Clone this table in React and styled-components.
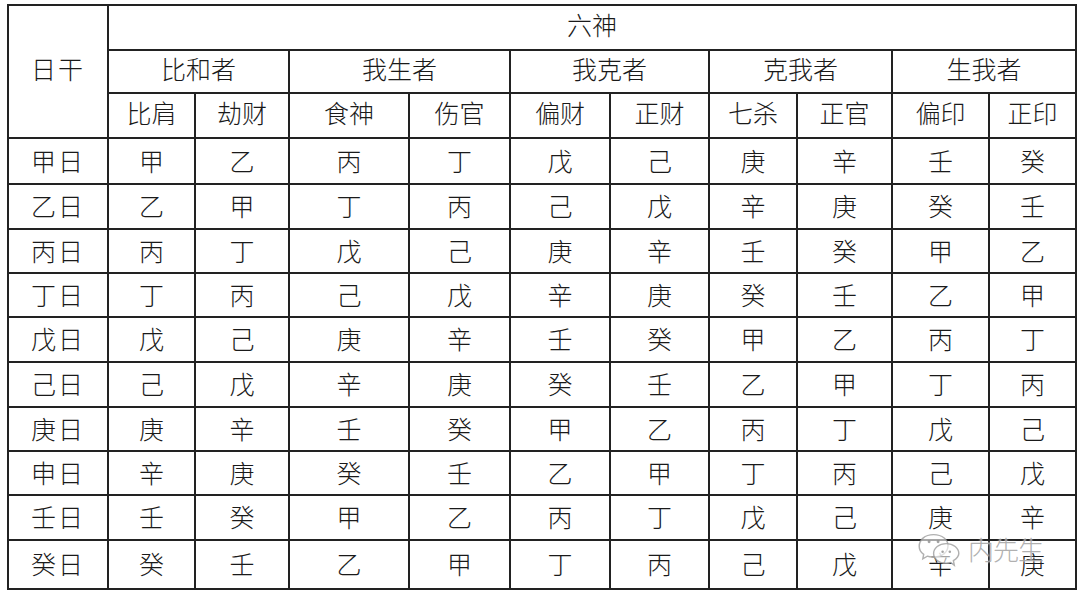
import React from "react";
import styled, { createGlobalStyle } from "styled-components";

const Global = createGlobalStyle`
  html, body { margin: 0; padding: 0; background: #fff; }
  body { font-family: "Noto Sans CJK SC", "Noto Sans", sans-serif; }
`;

const Page = styled.div`
  width: 1080px;
  height: 595px;
  position: relative;
  background: #fff;
  padding: 4px 0 0 7px;
  box-sizing: border-box;
`;

const Table = styled.table`
  border-collapse: collapse;
  table-layout: fixed;
  width: 1068px;
  color: #1a1a1a;
  font-family: "Noto Sans CJK SC", sans-serif;
  font-weight: 300;
  font-size: 25px;
`;

const Cell = styled.td`
  border: 2px solid #222;
  text-align: center;
  vertical-align: middle;
  padding: 0 0 ${(p) => (p.$head ? 7 : 2)}px 0;
  height: ${(p) => p.$h}px;
  letter-spacing: ${(p) => (p.$wide ? 2 : 0)}px;
  line-height: 1;
  box-sizing: border-box;
`;

const Watermark = styled.div`
  position: absolute;
  left: 916px;
  top: 530px;
  display: flex;
  align-items: center;
  gap: 6px;
  pointer-events: none;
`;

const MarkText = styled.span`
  font-family: "Noto Sans CJK SC", sans-serif;
  font-size: 26px;
  font-weight: 300;
  color: rgba(150, 150, 150, 0.75);
  letter-spacing: -1px;
  text-shadow: 0 0 2px #fff;
`;

const widths = [100, 87, 94, 120, 101, 100, 99, 88, 95, 97, 87];

const groups = ["比和者", "我生者", "我克者", "克我者", "生我者"];
const subs = ["比肩", "劫财", "食神", "伤官", "偏财", "正财", "七杀", "正官", "偏印", "正印"];

const rows = [
  ["甲日", "甲", "乙", "丙", "丁", "戊", "己", "庚", "辛", "壬", "癸"],
  ["乙日", "乙", "甲", "丁", "丙", "己", "戊", "辛", "庚", "癸", "壬"],
  ["丙日", "丙", "丁", "戊", "己", "庚", "辛", "壬", "癸", "甲", "乙"],
  ["丁日", "丁", "丙", "己", "戊", "辛", "庚", "癸", "壬", "乙", "甲"],
  ["戊日", "戊", "己", "庚", "辛", "壬", "癸", "甲", "乙", "丙", "丁"],
  ["己日", "己", "戊", "辛", "庚", "癸", "壬", "乙", "甲", "丁", "丙"],
  ["庚日", "庚", "辛", "壬", "癸", "甲", "乙", "丙", "丁", "戊", "己"],
  ["申日", "辛", "庚", "癸", "壬", "乙", "甲", "丁", "丙", "己", "戊"],
  ["壬日", "壬", "癸", "甲", "乙", "丙", "丁", "戊", "己", "庚", "辛"],
  ["癸日", "癸", "壬", "乙", "甲", "丁", "丙", "己", "戊", "辛", "庚"],
];

const rowH = [46, 45, 44, 44, 45, 45, 44, 44, 45, 49];

function WeChatIcon() {
  return (
    <svg width="46" height="36" viewBox="0 0 48 40">
      <g fill="rgba(255,255,255,0.6)" stroke="rgba(150,150,150,0.75)" strokeWidth="1.6">
        <path d="M18 4 C8 4 2 10 2 17 C2 21 4 24 7 26 L6 31 L11 28 C13 29 15 29 18 29 C28 29 34 23 34 16 C34 10 28 4 18 4 Z" />
        <path d="M32 14 C24 14 18 19 18 25 C18 31 24 36 32 36 C34 36 35 36 37 35 L41 38 L40 33 C43 31 46 28 46 25 C46 19 40 14 32 14 Z" />
      </g>
      <g fill="rgba(140,140,140,0.8)">
        <circle cx="13" cy="12" r="1.6" />
        <circle cx="23" cy="12" r="1.6" />
        <circle cx="28" cy="23" r="1.4" />
        <circle cx="36" cy="23" r="1.4" />
      </g>
    </svg>
  );
}

export default function App() {
  return (
    <>
      <Global />
      <Page>
        <Table>
          <colgroup>
            {widths.map((w, i) => (
              <col key={i} style={{ width: w }} />
            ))}
          </colgroup>
          <tbody>
            <tr>
              <Cell rowSpan={3} $head $wide>日干</Cell>
              <Cell colSpan={10} $h={45} $head>六神</Cell>
            </tr>
            <tr>
              {groups.map((g) => (
                <Cell key={g} colSpan={2} $h={43} $head>{g}</Cell>
              ))}
            </tr>
            <tr>
              {subs.map((s) => (
                <Cell key={s} $h={45} $head>{s}</Cell>
              ))}
            </tr>
            {rows.map((r, ri) => (
              <tr key={ri}>
                {r.map((c, ci) => (
                  <Cell key={ci} $h={rowH[ri]} $wide={ci === 0}>{c}</Cell>
                ))}
              </tr>
            ))}
          </tbody>
        </Table>
        <Watermark>
          <WeChatIcon />
          <MarkText>内先生</MarkText>
        </Watermark>
      </Page>
    </>
  );
}
